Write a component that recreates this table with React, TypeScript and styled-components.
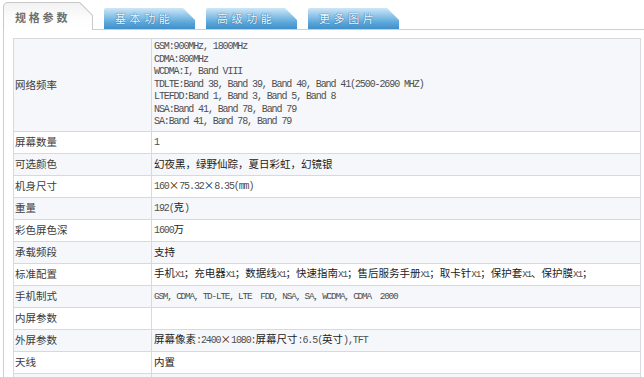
import styled, { createGlobalStyle } from "styled-components";

const GlobalStyle = createGlobalStyle`
  html, body {
    margin: 0;
    padding: 0;
    background: #fff;
  }
  body {
    font-family: "Noto Sans CJK SC", "Liberation Sans", sans-serif;
    color: #333;
  }
`;

const Page = styled.div`
  width: 644px;
  height: 377px;
  overflow: hidden;
  padding-left: 3px;
  box-sizing: border-box;
`;

const TabBar = styled.div`
  height: 29px;
  display: flex;
  align-items: flex-end;
  column-gap: 11px;
  border-bottom: 1px solid #cfcfcf;
`;

const ActiveTab = styled.div`
  position: relative;
  top: 1px;
  width: 90px;
  height: 28px;
  padding: 1px 1px 0;
  box-sizing: border-box;
  background: #c9c9c9;
  border-top-left-radius: 5px;
  clip-path: polygon(0 0, calc(100% - 13px) 0, 100% 13px, 100% 100%, 0 100%);
`;

const ActiveTabFace = styled.div`
  height: 100%;
  padding: 6px 0 0 11px;
  box-sizing: border-box;
  background: linear-gradient(to bottom, #f2f2f2, #fdfdfd 60%, #fff);
  border-top-left-radius: 4px;
  clip-path: polygon(0 0, calc(100% - 12.6px) 0, 100% 12.6px, 100% 100%, 0 100%);
  color: #6f6f6f;
  font-size: 11px;
  font-weight: 700;
  letter-spacing: 2.8px;
  line-height: 16px;
`;

const Tab = styled.div`
  width: 91px;
  height: 21px;
  padding-left: 11px;
  box-sizing: border-box;
  background: linear-gradient(to bottom, #cfe7f7 0%, #92c7ea 35%, #5ba6d9 70%, #3f8fca 100%);
  border-top-left-radius: 2px;
  clip-path: polygon(0 0, calc(100% - 12px) 0, 100% 12px, 100% 100%, 0 100%);
  color: #f3f8fc;
  font-size: 11px;
  letter-spacing: 3.6px;
  line-height: 21px;
  text-shadow: 0 0 1px #2a6aa0, 0 0 1px #2a6aa0;
`;

const Panel = styled.div`
  border-left: 1px solid #cfcfcf;
  padding: 8px 0 0 9px;
`;

const SpecTable = styled.table`
  width: 628px;
  border-collapse: collapse;
  border: 1px solid #d6d9dd;
  table-layout: fixed;
`;

const Row = styled.tr<{ $alt: boolean }>`
  background: ${(p) => (p.$alt ? "#f5f7fa" : "#fff")};
`;

const LabelCell = styled.td`
  width: 135px;
  height: 21px;
  padding: 0 1px;
  border: 1px solid #d6d9dd;
  font-size: 10.5px;
  line-height: 14px;
  color: #3c3c3c;
  vertical-align: middle;
`;

const ValueCell = styled.td`
  height: 21px;
  padding: 0 2px;
  border: 1px solid #d6d9dd;
  font-size: 10.5px;
  line-height: 14px;
  color: #222;
  vertical-align: middle;
  white-space: nowrap;
`;

const Lines = styled.div`
  padding: 2px 0;
  display: flex;
  flex-direction: column;
`;

const Mono = styled.span<{ $small?: boolean }>`
  font-family: "Liberation Mono", "DejaVu Sans Mono", monospace;
  font-size: ${(p) => (p.$small ? "9.4px" : "10px")};
  letter-spacing: ${(p) => (p.$small ? "-1.2px" : "-1.1px")};
  color: #4f4f4f;
  line-height: 12.5px;
  white-space: pre;
`;

const bands = [
  "GSM:900MHz, 1800MHz",
  "CDMA:800MHz",
  "WCDMA:I, Band VIII",
  "TDLTE:Band 38, Band 39, Band 40, Band 41(2500-2690 MHZ)",
  "LTEFDD:Band 1, Band 3, Band 5, Band 8",
  "NSA:Band 41, Band 78, Band 79",
  "SA:Band 41, Band 78, Band 79",
];

const accessories = ["手机", "充电器", "数据线", "快速指南", "售后服务手册", "取卡针", "保护套", "保护膜"];

const rows: { label: string; value: React.ReactNode }[] = [
  {
    label: "网络频率",
    value: (
      <Lines>
        {bands.map((b) => (
          <Mono key={b}>{b}</Mono>
        ))}
      </Lines>
    ),
  },
  { label: "屏幕数量", value: <Mono>1</Mono> },
  { label: "可选颜色", value: "幻夜黑，绿野仙踪，夏日彩虹，幻镜银" },
  {
    label: "机身尺寸",
    value: (
      <>
        <Mono>160</Mono>×<Mono>75.32</Mono>×<Mono>8.35(mm)</Mono>
      </>
    ),
  },
  {
    label: "重量",
    value: (
      <>
        <Mono>192(</Mono>克<Mono>)</Mono>
      </>
    ),
  },
  {
    label: "彩色屏色深",
    value: (
      <>
        <Mono>1600</Mono>万
      </>
    ),
  },
  { label: "承载频段", value: "支持" },
  {
    label: "标准配置",
    value: (
      <>
        {accessories.map((a, i) => (
          <span key={a}>
            {a}
            <Mono $small>X1</Mono>
            {i === 6 ? "、" : "；"}
          </span>
        ))}
      </>
    ),
  },
  {
    label: "手机制式",
    value: <Mono $small>GSM, CDMA, TD-LTE, LTE  FDD, NSA, SA, WCDMA, CDMA  2000</Mono>,
  },
  { label: "内屏参数", value: "" },
  {
    label: "外屏参数",
    value: (
      <>
        屏幕像素<Mono>:2400</Mono>×<Mono>1080:</Mono>屏幕尺寸<Mono>:6.5(</Mono>英寸<Mono>),TFT</Mono>
      </>
    ),
  },
  { label: "天线", value: "内置" },
  { label: "", value: "" },
];

const App = () => {
  return (
    <Page>
      <GlobalStyle />
      <TabBar>
        <ActiveTab>
          <ActiveTabFace>规格参数</ActiveTabFace>
        </ActiveTab>
        <Tab>基本功能</Tab>
        <Tab>高级功能</Tab>
        <Tab>更多图片</Tab>
      </TabBar>
      <Panel>
        <SpecTable>
          <tbody>
            {rows.map((r, i) => (
              <Row key={i} $alt={i % 2 === 0}>
                <LabelCell>{r.label}</LabelCell>
                <ValueCell>{r.value}</ValueCell>
              </Row>
            ))}
          </tbody>
        </SpecTable>
      </Panel>
    </Page>
  );
};

export default App;
